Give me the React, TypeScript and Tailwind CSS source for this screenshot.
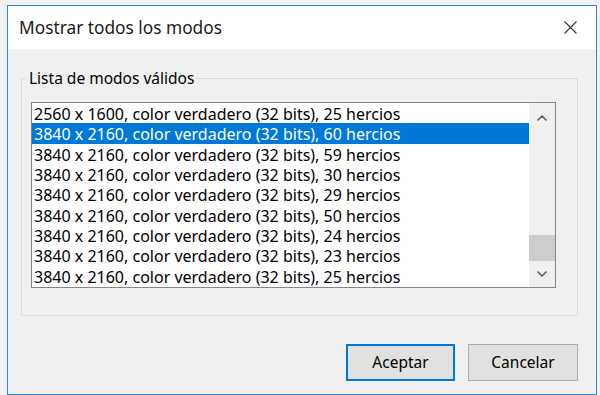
import { ChevronUp, ChevronDown } from 'lucide-react';

const modes = [
  { res: '2560 x 1600', hz: 25 },
  { res: '3840 x 2160', hz: 60 },
  { res: '3840 x 2160', hz: 59 },
  { res: '3840 x 2160', hz: 30 },
  { res: '3840 x 2160', hz: 29 },
  { res: '3840 x 2160', hz: 50 },
  { res: '3840 x 2160', hz: 24 },
  { res: '3840 x 2160', hz: 23 },
  { res: '3840 x 2160', hz: 25 },
];

export default function App() {
  const selected = 1;

  return (
    <div className="w-[600px] h-[395px] bg-[#f2f2f2] pt-[5px] pl-[7px] font-['Noto_Sans',sans-serif] text-black overflow-hidden">
      <div className="w-[590px] h-[390px] border border-[#2b87d6] bg-[#f0f0f0] flex flex-col">
        {/* title bar */}
        <div className="h-[43px] bg-white flex items-center justify-between pl-[11px] pr-[19px]">
          <span className="text-[17.3px] text-[#1a1a1a]">Mostrar todos los modos</span>
          <svg width="13" height="13" viewBox="0 0 13 13" className="text-[#333]">
            <path d="M0.5 0.5 L12.5 12.5 M12.5 0.5 L0.5 12.5" stroke="currentColor" strokeWidth="1.1" />
          </svg>
        </div>

        <div className="flex-1 flex flex-col pl-[13px]">
          {/* group box */}
          <fieldset className="mt-[20px] w-[557px] h-[247px] border border-[#dcdcdc] pl-[9px] pt-[15px]">
            <legend className="-ml-[4px] px-[2px] text-[15.5px] leading-[18px]">Lista de modos válidos</legend>
            <div className="w-[525px] h-[186px] border border-[#828790] bg-white flex">
              <div className="flex-1 flex flex-col">
                {modes.map((m, i) => (
                  <div
                    key={i}
                    className={
                      i === selected
                        ? 'h-[20.3px] pl-[2px] pt-[2px] flex items-center text-[16px] bg-[#0078d7] text-white whitespace-nowrap'
                        : 'h-[20.3px] pl-[2px] pt-[2px] flex items-center text-[16px] whitespace-nowrap'
                    }
                  >
                    {m.res}, color verdadero (32 bits), {m.hz} hercios
                  </div>
                ))}
              </div>
              <div className="w-[26px] bg-[#f0f0f0] flex flex-col items-center">
                <div className="h-[30px] flex items-center justify-center text-[#606060]">
                  <ChevronUp size={16} strokeWidth={2.5} />
                </div>
                <div className="flex-1" />
                <div className="w-[26px] h-[26px] bg-[#cdcdcd]" />
                <div className="h-[26px] flex items-center justify-center text-[#606060]">
                  <ChevronDown size={16} strokeWidth={2.5} />
                </div>
              </div>
            </div>
          </fieldset>

          {/* buttons */}
          <div className="w-[557px] flex justify-end gap-[13px] mt-[28px]">
            <button className="w-[109px] h-[37px] border-2 border-[#0078d7] bg-[#e1e1e1] text-[15.5px]">
              Aceptar
            </button>
            <button className="w-[110px] h-[37px] border border-[#adadad] bg-[#e1e1e1] text-[15.5px]">
              Cancelar
            </button>
          </div>
        </div>
      </div>
    </div>
  );
}
